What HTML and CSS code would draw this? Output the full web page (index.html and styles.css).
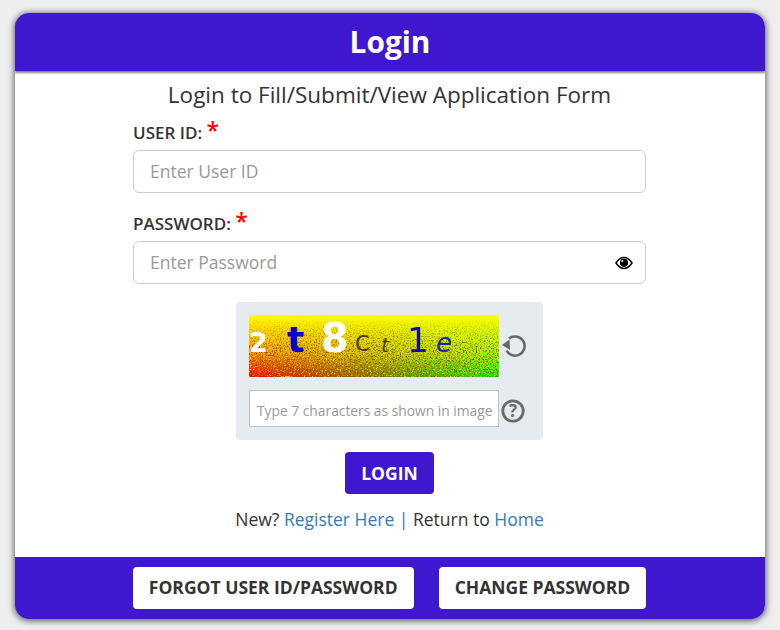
FILE: index.html
```html
<!DOCTYPE html>
<html lang="en">
<head>
    <meta charset="UTF-8">
    <title>Login</title>
    <link rel="stylesheet" href="styles.css">
</head>
<body>
    <div class="card">
        <div class="card-header">Login</div>
        <div class="card-body">
            <div class="subtitle">Login to Fill/Submit/View Application Form</div>
            <form class="login-form">
                <div class="field">
                    <label class="field-label">USER ID: <span class="req">*</span></label>
                    <div class="input-box"><span class="placeholder">Enter User ID</span></div>
                </div>
                <div class="field">
                    <label class="field-label">PASSWORD: <span class="req">*</span></label>
                    <div class="input-box">
                        <span class="placeholder">Enter Password</span>
                        <svg class="eye" width="18" height="14" viewBox="0 0 18 14">
                            <path d="M1 7C3.500 3.200 6 1.600 9 1.600S14.500 3.200 17 7C14.500 10.800 12 12.400 9 12.400S3.500 10.800 1 7Z" fill="#fff" stroke="#000" stroke-width="1.500"/>
                            <circle cx="9" cy="6.800" r="4.100" fill="#000"/>
                            <circle cx="7.300" cy="5" r="1.100" fill="#fff"/>
                        </svg>
                    </div>
                </div>
                <div class="captcha-box">
                    <div class="captcha-row">
                        <div class="captcha-img">
                            <svg class="captcha-noise" width="250" height="62">
                                <filter id="grain-dark" color-interpolation-filters="sRGB">
                                    <feTurbulence type="fractalNoise" baseFrequency="0.7" numOctaves="2" seed="4"/>
                                    <feColorMatrix values="0 0 0 0 0.55  0 0 0 0 0.3  0 0 0 0 0  0 0 0 -4 2.100"/>
                                </filter>
                                <filter id="grain-light" color-interpolation-filters="sRGB">
                                    <feTurbulence type="fractalNoise" baseFrequency="0.7" numOctaves="2" seed="11"/>
                                    <feColorMatrix values="0 0 0 0 0.95  0 0 0 0 0.85  0 0 0 0 0.15  0 0 0 -4 1.800"/>
                                </filter>
                                <rect width="250" height="62" filter="url(#grain-dark)"/>
                                <rect width="250" height="62" filter="url(#grain-light)"/>
                            </svg>
                            <span class="ch ch-1">2</span>
                            <span class="ch ch-2">t</span>
                            <span class="ch ch-3">8</span>
                            <span class="ch ch-4">C</span>
                            <span class="ch ch-5">t</span>
                            <span class="ch ch-6">1</span>
                            <span class="ch ch-7">e</span>
                        </div>
                        <svg class="captcha-icon" width="26" height="26" viewBox="0 0 26 26">
                            <path d="M8 5.500A9.600 9.600 0 1 1 5.500 17.500" fill="none" stroke="#666" stroke-width="2.500"/>
                            <path d="M1 12L8.500 6.500L9 17Z" fill="#666"/>
                        </svg>
                    </div>
                    <div class="captcha-row captcha-row-input">
                        <div class="captcha-input">Type 7 characters as shown in image</div>
                        <svg class="captcha-icon help-icon" width="26" height="26" viewBox="0 0 26 26">
                            <circle cx="13" cy="13" r="10.200" fill="none" stroke="#6b6b6b" stroke-width="2.800"/>
                            <text x="13" y="19" text-anchor="middle" class="help-mark">?</text>
                        </svg>
                    </div>
                </div>
                <div class="submit-row"><button type="button" class="btn-login">LOGIN</button></div>
                <div class="links">New? <a href="#">Register Here</a> <span class="sep">|</span> Return to <a href="#">Home</a></div>
            </form>
        </div>
        <div class="card-footer">
            <a href="#" class="btn-white">FORGOT USER ID/PASSWORD</a>
            <a href="#" class="btn-white">CHANGE PASSWORD</a>
        </div>
    </div>
</body>
</html>
```

FILE: styles.css
```css
* {
    box-sizing: border-box;
}
html, body {
    height: 100%;
}
body {
    margin: 0;
    padding: 13px 15px 11px;
    background: #eeeeee;
    font-family: 'Open Sans', 'Liberation Sans', sans-serif;
    color: #333;
    overflow: hidden;
}
.card {
    width: 750px;
    height: 606px;
    background: white;
    border-radius: 14px;
    overflow: hidden;
    display: flex;
    flex-direction: column;
    box-shadow: 0 1px 6px 1px rgba(0, 0, 0, 0.6);
}
.card-header {
    height: 58px;
    flex: none;
    background: #3f17ce;
    color: white;
    font-size: 29.800px;
    font-weight: 700;
    line-height: 58px;
    text-align: center;
    box-shadow: 0 2px 2px rgba(0, 0, 0, 0.5);
    position: relative;
}
.card-body {
    flex: 1;
    display: flex;
    flex-direction: column;
    align-items: center;
    padding-right: 1px;
}
.subtitle {
    font-size: 22.500px;
    line-height: 30px;
    margin-top: 9px;
}
.login-form {
    width: 513px;
}
.field {
    margin-top: 9px;
}
.field + .field {
    margin-top: 17px;
}
.field-label {
    display: block;
    height: 31px;
    font-size: 17px;
    font-weight: 600;
    line-height: 27px;
}
.req {
    color: red;
    font-size: 23px;
    line-height: 20px;
}
.input-box {
    height: 43px;
    border: 1px solid #ccc;
    border-radius: 6px;
    padding: 0 12px 0 16px;
    display: flex;
    align-items: center;
    justify-content: space-between;
    font-size: 17.500px;
}
.placeholder {
    color: #999;
    margin-bottom: 2px;
}
.captcha-box {
    width: 307px;
    height: 138px;
    margin: 18px auto 0;
    padding: 13px;
    background: #e5ebef;
    border-radius: 4px;
}
.captcha-row {
    display: flex;
    align-items: center;
    gap: 2px;
}
.captcha-row-input {
    margin-top: 13px;
}
.captcha-img {
    width: 250px;
    height: 62px;
    position: relative;
    overflow: hidden;
    background: linear-gradient(to bottom, #ffff00 0%, rgba(255, 255, 0, 0.6) 60%, rgba(255, 255, 0, 0) 100%), linear-gradient(to right, #ff0000, #00ff00);
}
.captcha-noise {
    position: absolute;
    left: 0;
    top: 0;
    mask-image: linear-gradient(to bottom, transparent 5%, black 55%);
}
.ch {
    position: absolute;
    font-family: 'DejaVu Sans', sans-serif;
    line-height: 1;
}
.ch-1 { left: 0; top: 14px; font-size: 27px; font-weight: 700; color: white; }
.ch-2 { left: 38px; top: 7px; font-size: 36px; font-weight: 700; color: #0000d8; }
.ch-3 { left: 72px; top: 3px; font-size: 40px; font-weight: 700; color: white; }
.ch-4 { left: 106px; top: 19px; font-size: 21px; color: #4a3a30; }
.ch-5 { left: 132px; top: 20px; font-size: 20px; font-style: italic; color: #4a3a30; }
.ch-6 { left: 158px; top: 8px; font-size: 34px; color: #0a0aa8; }
.ch-7 { left: 187px; top: 15px; font-size: 26px; font-style: italic; color: #1a2aa8; }
.captcha-input {
    width: 250px;
    height: 37px;
    border: 1px solid #bbc4cb;
    background: white;
    padding-left: 7px;
    font-size: 13.800px;
    line-height: 39px;
    color: #999;
    white-space: nowrap;
}
.help-icon {
    margin: 4px 0 0 -1px;
}
.help-mark {
    font-family: 'Open Sans', sans-serif;
    font-size: 17px;
    font-weight: 700;
    fill: #6b6b6b;
}
.submit-row {
    text-align: center;
    margin-top: 12px;
}
.btn-login {
    width: 89px;
    height: 42px;
    border: none;
    border-radius: 4px;
    background: #3f17ce;
    color: white;
    font-family: inherit;
    font-size: 17.500px;
    font-weight: 700;
}
.links {
    margin-top: 12px;
    text-align: center;
    font-size: 17.500px;
    line-height: 26px;
}
.links a, .sep {
    color: #337ab7;
    text-decoration: none;
}
.card-footer {
    height: 62px;
    flex: none;
    background: #3f17ce;
    display: flex;
    justify-content: center;
    gap: 25px;
    padding: 10px 1px 0 0;
}
.btn-white {
    height: 42px;
    padding: 0 16px;
    background: white;
    border-radius: 4px;
    color: #333;
    font-size: 17.500px;
    font-weight: 700;
    line-height: 40px;
    text-decoration: none;
}
.eye {
    flex: none;
}
```
